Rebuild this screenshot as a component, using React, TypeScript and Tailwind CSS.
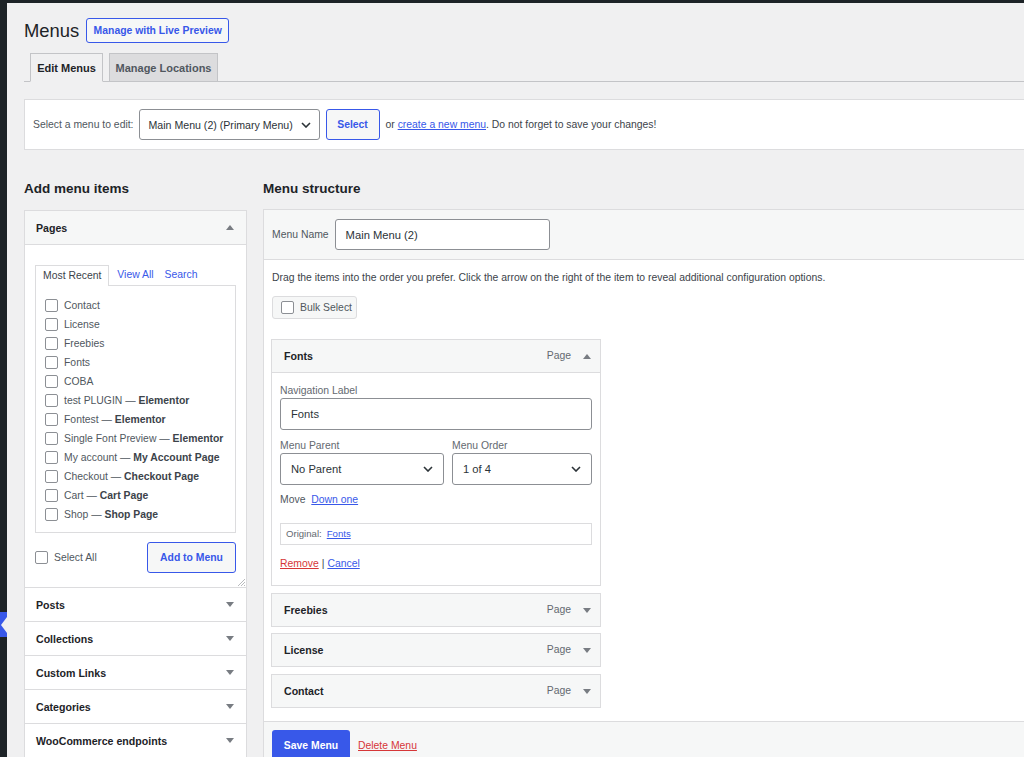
import React from "react";

const pages: [string, string?][] = [
  ["Contact"],
  ["License"],
  ["Freebies"],
  ["Fonts"],
  ["COBA"],
  ["test PLUGIN", "Elementor"],
  ["Fontest", "Elementor"],
  ["Single Font Preview", "Elementor"],
  ["My account", "My Account Page"],
  ["Checkout", "Checkout Page"],
  ["Cart", "Cart Page"],
  ["Shop", "Shop Page"],
];

const sections = ["Posts", "Collections", "Custom Links", "Categories", "WooCommerce endpoints"];

const Box = () => (
  <span className="block w-[13px] h-[13px] shrink-0 rounded-[2px] border border-[#8c8f94] bg-white" />
);

const Tri = ({ up }: { up?: boolean }) => (
  <svg width="8" height="5" viewBox="0 0 8 5" className="shrink-0">
    <polygon points={up ? "0,5 4,0 8,5" : "0,0 8,0 4,5"} fill="#787c82" />
  </svg>
);

const Chevron = () => (
  <svg width="10" height="6" viewBox="0 0 10 6" className="shrink-0">
    <path d="M1 1l4 4 4-4" fill="none" stroke="#2c3338" strokeWidth="1.6" />
  </svg>
);

const MenuItem = ({ title, open, className = "" }: { title: string; open?: boolean; className?: string }) => (
  <div className={`h-[34px] border border-[#dcdcde] bg-[#f6f7f7] flex items-center pl-[12px] pr-[9px] ${className}`}>
    <span className="font-bold text-[#1d2327] text-[10.6px]">{title}</span>
    <span className="ml-auto text-[#646970]">Page</span>
    <span className="ml-[12px]">
      <Tri up={open} />
    </span>
  </div>
);

export default function App() {
  return (
    <div className="flex h-[757px] overflow-hidden bg-[#1d2327] pt-[3px] font-['Liberation_Sans',Arial,sans-serif] text-[10.4px] leading-[14px] text-[#3c434a]">
      {/* admin sidebar edge */}
      <div className="w-[7px] shrink-0 flex flex-col">
        <div className="h-[609px] shrink-0" />
        <div className="h-[25px] bg-[#3858e9] flex items-center justify-end">
          <svg width="7" height="16" viewBox="0 0 7 16">
            <polygon points="7,0 1,8 7,16" fill="#f0f0f1" />
          </svg>
        </div>
      </div>

      <div className="flex-1 bg-[#f0f0f1] pl-[17px] overflow-hidden">
        <div className="w-[1100px]">
          {/* title */}
          <div className="flex items-center gap-[7px] pt-[15px]">
            <h1 className="text-[18.4px] leading-[25px] text-[#1d2327]">Menus</h1>
            <button className="h-[25px] w-[143px] border border-[#3858e9] rounded-[3px] text-[#3858e9] font-bold bg-[#f6f7f7]">
              Manage with Live Preview
            </button>
          </div>

          {/* tabs */}
          <div className="mt-[10px] flex gap-[6px] pl-[6px] border-b border-[#c3c4c7]">
            <div className="-mb-px h-[29px] w-[73px] flex items-center justify-center border border-[#c3c4c7] border-b-[#f0f0f1] bg-[#f0f0f1] text-[11px] font-bold text-[#1d2327]">
              Edit Menus
            </div>
            <div className="-mb-px h-[29px] w-[109px] flex items-center justify-center border border-[#c3c4c7] bg-[#dcdcde] text-[11px] font-bold text-[#50575e]">
              Manage Locations
            </div>
          </div>

          {/* select menu bar */}
          <div className="mt-[17px] h-[51px] bg-white border border-[#dcdcde] flex items-center px-[8px]">
            <span className="text-[#50575e] whitespace-nowrap">Select a menu to edit:</span>
            <div className="ml-[5px] w-[181px] h-[31px] shrink-0 border border-[#8c8f94] rounded-[3px] flex items-center justify-between pl-[9px] pr-[8px] text-[10.6px] text-[#2c3338]">
              <span className="whitespace-nowrap">Main Menu (2) (Primary Menu)</span>
              <Chevron />
            </div>
            <button className="ml-[6px] w-[54px] h-[31px] shrink-0 border border-[#3858e9] rounded-[3px] text-[#3858e9] font-bold bg-[#f6f7f7]">
              Select
            </button>
            <span className="ml-[6px] text-[#3c434a] whitespace-nowrap">
              or <a className="text-[#3858e9] underline">create a new menu</a>. Do not forget to save your changes!
            </span>
          </div>

          <div className="mt-[29px] flex gap-[16px]">
            {/* left column */}
            <div className="w-[223px] shrink-0">
              <h2 className="h-[20px] flex items-center text-[13.5px] font-bold text-[#1d2327]">Add menu items</h2>
              <div className="mt-[11px] border border-[#dcdcde] bg-white">
                <div className="h-[34px] bg-[#f6f7f7] border-b border-[#dcdcde] flex items-center justify-between pl-[11px] pr-[12px]">
                  <span className="font-bold text-[#1d2327] text-[10.6px]">Pages</span>
                  <Tri up />
                </div>
                <div className="h-[343px] border-b border-[#dcdcde] px-[10px] pt-[19px] relative">
                  <div className="flex items-end">
                    <div className="relative z-10 -mb-px h-[21px] px-[7px] flex items-center border border-b-0 border-[#dcdcde] bg-white text-[#3c434a]">
                      Most Recent
                    </div>
                    <a className="ml-[8px] h-[21px] flex items-center text-[#3858e9]">View All</a>
                    <a className="ml-[11px] h-[21px] flex items-center text-[#3858e9]">Search</a>
                  </div>
                  <div className="h-[248px] border border-[#dcdcde] pt-[10px] pl-[9px]">
                    {pages.map(([name, state]) => (
                      <div key={name} className="h-[19px] flex items-center gap-[6px]">
                        <Box />
                        <span className="text-[#50575e] whitespace-nowrap">
                          {name}
                          {state && (
                            <>
                              {" — "}
                              <b className="text-[#3c434a]">{state}</b>
                            </>
                          )}
                        </span>
                      </div>
                    ))}
                  </div>
                  <div className="mt-[9px] h-[31px] flex items-center justify-between">
                    <label className="flex items-center gap-[6px] text-[#50575e]">
                      <Box />
                      Select All
                    </label>
                    <button className="w-[89px] h-[31px] border border-[#3858e9] rounded-[3px] text-[#3858e9] font-bold bg-[#f6f7f7]">
                      Add to Menu
                    </button>
                  </div>
                  <svg width="7" height="7" viewBox="0 0 7 7" className="absolute right-[1px] bottom-[1px]">
                    <path d="M0 7L7 0M3 7L7 3M6 7L7 6" stroke="#a7aaad" strokeWidth="0.8" />
                  </svg>
                </div>
                {sections.map((s) => (
                  <div
                    key={s}
                    className="h-[34px] border-b border-[#dcdcde] flex items-center justify-between pl-[11px] pr-[12px]"
                  >
                    <span className="font-bold text-[#1d2327] text-[10.6px]">{s}</span>
                    <Tri />
                  </div>
                ))}
              </div>
            </div>

            {/* right column */}
            <div className="flex-1">
              <h2 className="h-[20px] flex items-center text-[13.5px] font-bold text-[#1d2327]">Menu structure</h2>
              <div className="mt-[10px] border border-[#dcdcde] bg-white">
                <div className="h-[50px] bg-[#f6f7f7] border-b border-[#dcdcde] flex items-center px-[8px]">
                  <span className="text-[#50575e]">Menu Name</span>
                  <div className="ml-[6px] w-[215px] h-[31px] border border-[#8c8f94] rounded-[3px] bg-white flex items-center px-[10px] text-[11.2px] text-[#2c3338]">
                    Main Menu (2)
                  </div>
                </div>

                <div className="px-[8px] pt-[11px] pb-[13px]">
                  <p className="text-[#3c434a]">
                    Drag the items into the order you prefer. Click the arrow on the right of the item to reveal
                    additional configuration options.
                  </p>
                  <div className="mt-[11px] w-[85px] h-[23px] border border-[#dcdcde] bg-[#f6f7f7] rounded-[3px] flex items-center pl-[8px] gap-[6px] text-[#50575e]">
                    <Box />
                    Bulk Select
                  </div>

                  <div className="mt-[20px] -ml-px w-[330px]">
                    <MenuItem title="Fonts" open />
                    <div className="h-[213px] border border-t-0 border-[#dcdcde] px-[8px] pt-[11px]">
                      <div className="text-[#646970]">Navigation Label</div>
                      <div className="h-[32px] border border-[#8c8f94] rounded-[3px] flex items-center px-[10px] text-[11.2px] text-[#2c3338]">
                        Fonts
                      </div>
                      <div className="mt-[9px] flex gap-[8px]">
                        <div className="w-[164px]">
                          <div className="text-[#646970]">Menu Parent</div>
                          <div className="h-[32px] border border-[#8c8f94] rounded-[3px] flex items-center justify-between px-[10px] text-[11.2px] text-[#2c3338]">
                            No Parent
                            <Chevron />
                          </div>
                        </div>
                        <div className="w-[140px]">
                          <div className="text-[#646970]">Menu Order</div>
                          <div className="h-[32px] border border-[#8c8f94] rounded-[3px] flex items-center justify-between px-[10px] text-[11.2px] text-[#2c3338]">
                            1 of 4
                            <Chevron />
                          </div>
                        </div>
                      </div>
                      <div className="mt-[8px] text-[#50575e]">
                        Move <a className="ml-[3px] text-[#3858e9] underline">Down one</a>
                      </div>
                      <div className="mt-[16px] h-[22px] border border-[#dcdcde] flex items-center px-[5px] text-[#646970] text-[9.6px]">
                        Original:<a className="ml-[5px] text-[#3858e9] underline">Fonts</a>
                      </div>
                      <div className="mt-[12px]">
                        <a className="text-[#d63638] underline">Remove</a>
                        <span className="mx-[3px] text-[#3c434a]">|</span>
                        <a className="text-[#3858e9] underline">Cancel</a>
                      </div>
                    </div>
                    <MenuItem title="Freebies" className="mt-[7px]" />
                    <MenuItem title="License" className="mt-[6px]" />
                    <MenuItem title="Contact" className="mt-[7px]" />
                  </div>
                </div>

                <div className="border-t border-[#dcdcde] bg-[#f6f7f7] px-[8px] pt-[8px] h-[60px] flex items-start">
                  <button className="w-[78px] h-[31px] bg-[#3858e9] rounded-[3px] text-white font-bold">Save Menu</button>
                  <a className="ml-[8px] h-[31px] flex items-center text-[#d63638] underline">Delete Menu</a>
                </div>
              </div>
            </div>
          </div>
        </div>
      </div>
    </div>
  );
}
